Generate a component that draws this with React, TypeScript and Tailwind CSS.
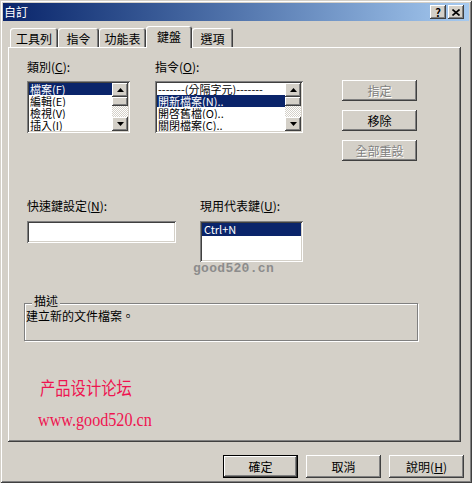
import React from 'react';

const raised = 'shadow-[inset_-1px_-1px_0_#404040,inset_1px_1px_0_#ffffff,inset_-2px_-2px_0_#808080]';
const sunken = 'shadow-[inset_1px_1px_0_#808080,inset_-1px_-1px_0_#ffffff,inset_2px_2px_0_#404040,inset_-2px_-2px_0_#d4d0c8]';
const disabledText = 'text-[#808080] [text-shadow:1px_1px_0_#ffffff]';

const U = ({ children }: { children: React.ReactNode }) => (
  <span className="underline underline-offset-[1px]">{children}</span>
);

const Arrow = ({ up }: { up?: boolean }) => (
  <div className={`flex h-[14px] w-[16px] items-center justify-center bg-[#d4d0c8] ${raised}`}>
    <svg width="7" height="4" viewBox="0 0 7 4">
      {up ? <polygon points="3.5,0 7,4 0,4" fill="#000" /> : <polygon points="0,0 7,0 3.5,4" fill="#000" />}
    </svg>
  </div>
);

const ScrollBar = () => (
  <div className="flex w-[16px] flex-col">
    <Arrow up />
    <div className={`h-[9px] bg-[#d4d0c8] ${raised}`} />
    <div className="flex-1 bg-[repeating-conic-gradient(#d4d0c8_0%_25%,#ffffff_0%_50%)] bg-[length:2px_2px]" />
    <Arrow />
  </div>
);

const ListBox = ({ items, selected, width }: { items: string[]; selected: number; width: string }) => (
  <div className={`flex h-[52px] ${width} bg-white p-[2px] ${sunken}`}>
    <div className="flex-1 overflow-hidden">
      {items.map((t, i) => (
        <div
          key={i}
          className={`h-[12px] overflow-hidden whitespace-nowrap pl-[1px] text-[11px] leading-[12px] ${i === selected ? 'bg-[#0a246a] text-white' : ''}`}
        >
          {t}
        </div>
      ))}
    </div>
    <ScrollBar />
  </div>
);

const Btn = ({ children, disabled, def, h = 'h-[21px]' }: { children: React.ReactNode; disabled?: boolean; def?: boolean; h?: string }) => (
  <div
    className={`flex w-[75px] ${h} items-center justify-center bg-[#d4d0c8] ${raised} ${def ? 'border border-black' : ''} ${disabled ? disabledText : ''}`}
  >
    {children}
  </div>
);

const Tab = ({ label, w, active }: { label: string; w: string; active?: boolean }) => (
  <div
    className={`flex ${w} items-center justify-center rounded-t-[3px] bg-[#d4d0c8] shadow-[inset_1px_1px_0_#ffffff,inset_-1px_0_0_#404040,inset_-2px_0_0_#808080] ${
      active ? 'relative z-10 -mb-px h-[22px]' : 'h-[19px] pt-[2px]'
    }`}
  >
    {label}
  </div>
);

export default function App() {
  return (
    <div className="flex h-[483px] w-[472px] flex-col overflow-hidden bg-[#d4d0c8] p-[3px] font-['Noto_Sans_CJK_TC',sans-serif] text-[12px] text-black shadow-[inset_1px_1px_0_#d4d0c8,inset_-1px_-1px_0_#404040,inset_2px_2px_0_#ffffff,inset_-2px_-2px_0_#808080]">
      {/* Title bar */}
      <div className="flex h-[18px] items-center justify-between bg-linear-to-r from-[#0a246a] to-[#a6caf0] pl-[1px] pr-[5px]">
        <span className="text-[12px] leading-[18px] text-white">自訂</span>
        <div className="flex gap-[2px]">
          <div className={`flex h-[14px] w-[16px] items-center justify-center bg-[#d4d0c8] text-[11px] font-bold leading-none ${raised}`}>
            ?
          </div>
          <div className={`flex h-[14px] w-[16px] items-center justify-center bg-[#d4d0c8] ${raised}`}>
            <svg width="8" height="7" viewBox="0 0 8 7">
              <path d="M0.5 0.5 L7.5 6.5 M7.5 0.5 L0.5 6.5" stroke="#000" strokeWidth="1.6" />
            </svg>
          </div>
        </div>
      </div>

      {/* Tabs */}
      <div className="mt-[5px] flex h-[21px] items-end pl-[7px]">
        <Tab label="工具列" w="w-[48px]" />
        <Tab label="指令" w="w-[41px]" />
        <Tab label="功能表" w="w-[47px]" />
        <Tab label="鍵盤" w="w-[46px]" active />
        <Tab label="選項" w="w-[41px]" />
      </div>

      {/* Panel */}
      <div className={`ml-[5px] h-[395px] w-[453px] pl-[19px] pt-[13px] ${raised}`}>
        <div className="flex">
          <div className="w-[103px]">
            <div className="h-[14px] leading-[14px]">
              類別(<U>C</U>):
            </div>
            <div className="mt-[7px]">
              <ListBox items={['檔案(F)', '編輯(E)', '檢視(V)', '插入(I)']} selected={0} width="w-[103px]" />
            </div>
          </div>
          <div className="ml-[25px] w-[148px]">
            <div className="h-[14px] leading-[14px]">
              指令(<U>O</U>):
            </div>
            <div className="mt-[7px]">
              <ListBox
                items={['-------(分隔字元)-------', '開新檔案(N)..', '開啓舊檔(O)..', '關閉檔案(C)..']}
                selected={1}
                width="w-[148px]"
              />
            </div>
          </div>
          <div className="ml-[39px] flex flex-col gap-[9px] pt-[20px]">
            <Btn disabled>指定</Btn>
            <Btn>移除</Btn>
            <Btn disabled>全部重設</Btn>
          </div>
        </div>

        <div className="mt-[38px] flex">
          <div className="w-[149px]">
            <div className="h-[14px] leading-[14px]">
              快速鍵設定(<U>N</U>):
            </div>
            <div className={`mt-[8px] h-[22px] w-[149px] bg-white ${sunken}`} />
          </div>
          <div className="ml-[24px] w-[103px]">
            <div className="h-[14px] leading-[14px]">
              現用代表鍵(<U>U</U>):
            </div>
            <div className={`mt-[8px] h-[41px] w-[103px] bg-white p-[2px] ${sunken}`}>
              <div className="h-[13px] bg-[#0a246a] pl-[2px] text-[11px] leading-[13px] text-white">Ctrl+N</div>
            </div>
            <div className="-ml-[7px] h-[14px] font-['Liberation_Mono',monospace] text-[13px] font-bold leading-[14px] tracking-[0.3px] text-[#8c8c8c]">
              good520.cn
            </div>
          </div>
        </div>

        {/* Description group */}
        <div className="relative -ml-[3px] mt-[27px] h-[38px] w-[394px] border border-[#808080] pl-[1px] pt-[5px] shadow-[inset_1px_1px_0_#ffffff,1px_1px_0_#ffffff]">
          <div className="absolute -top-[9px] left-[7px] bg-[#d4d0c8] px-[2px] leading-[12px]">描述</div>
          <div className="leading-[13px]">建立新的文件檔案。</div>
        </div>

        <div className="ml-[13px] mt-[35px] origin-left scale-x-[0.85] font-['Noto_Sans_CJK_SC',sans-serif] text-[18px] leading-[22px] text-[#ef1450]">
          产品设计论坛
        </div>
        <div className="ml-[11px] mt-[11px] origin-left scale-x-[0.85] font-['Liberation_Serif',serif] text-[19px] leading-[22px] text-[#ef1450]">
          www.good520.cn
        </div>
      </div>

      {/* Footer */}
      <div className="mt-[13px] flex justify-end gap-[8px] pr-[5px]">
        <Btn def h="h-[23px]">確定</Btn>
        <Btn h="h-[23px]">取消</Btn>
        <Btn h="h-[23px]">
          說明(<U>H</U>)
        </Btn>
      </div>
    </div>
  );
}
